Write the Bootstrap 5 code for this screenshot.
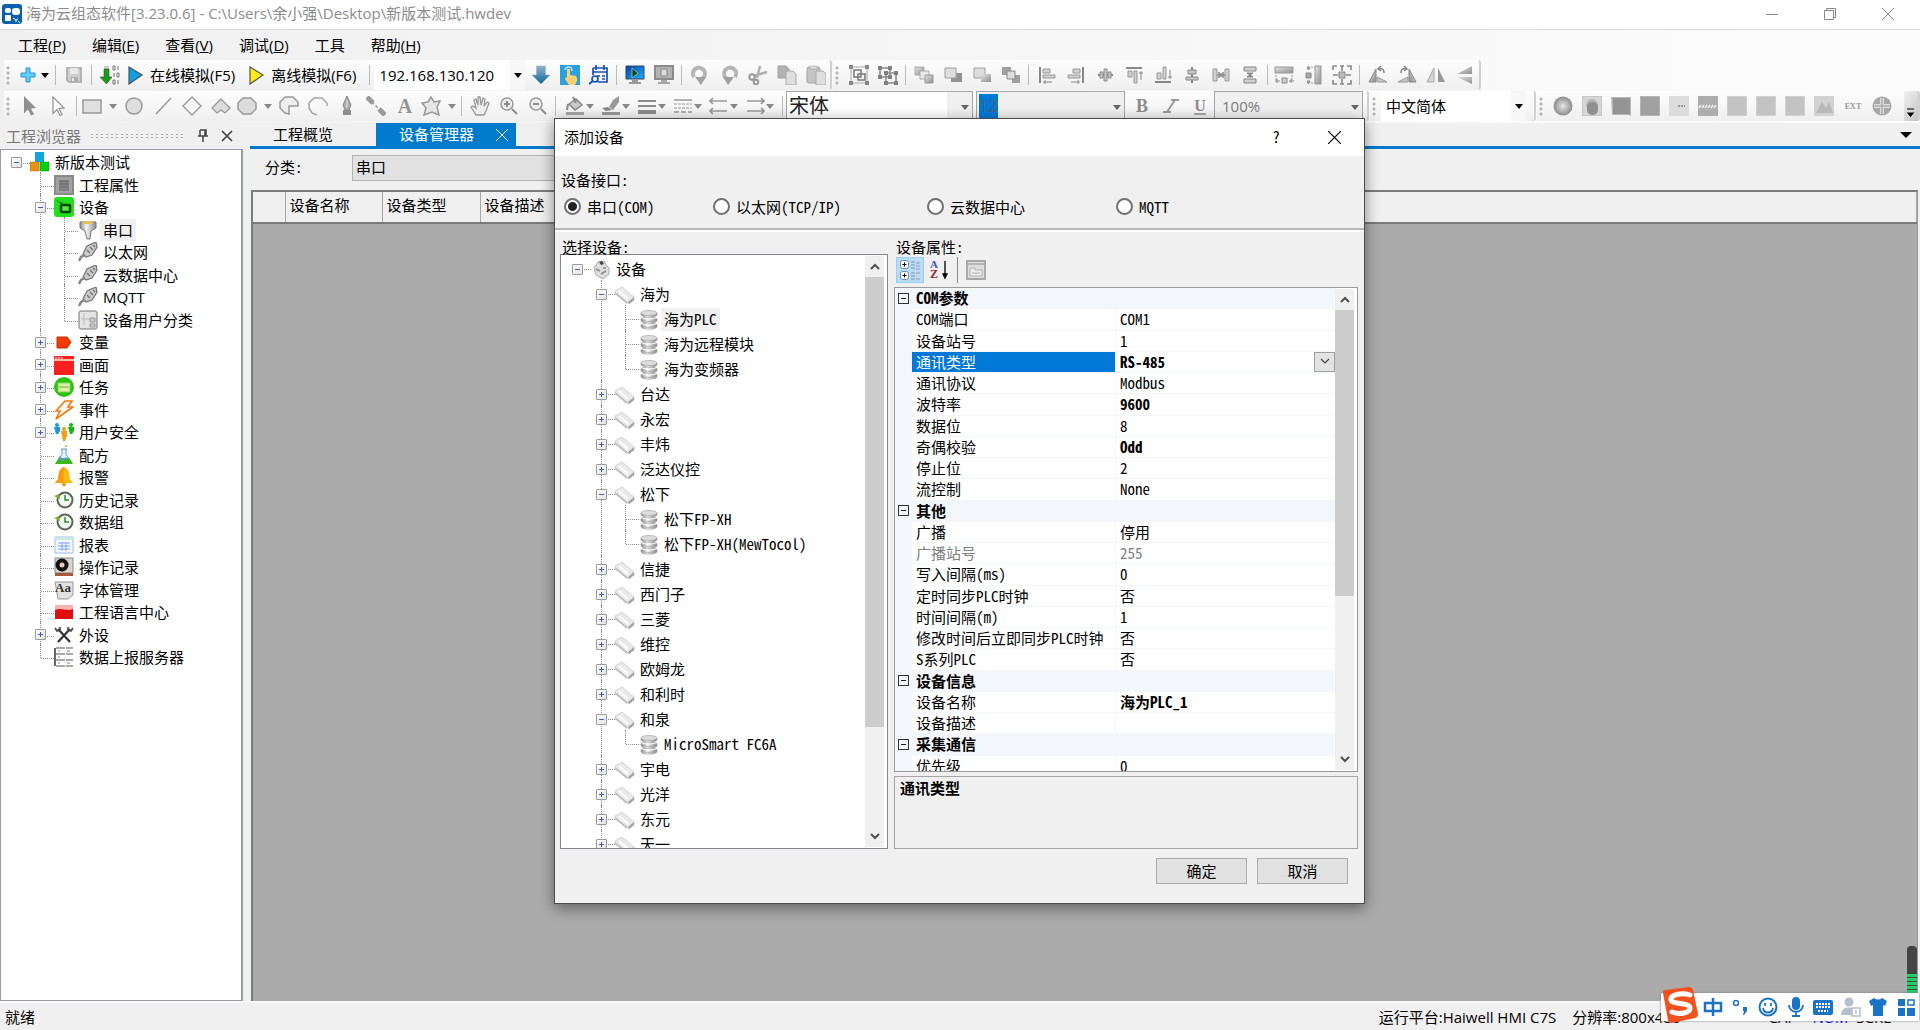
<!DOCTYPE html>
<html lang="zh-CN">
<head>
<meta charset="utf-8">
<meta name="viewport" content="width=device-width, initial-scale=1">
<title>海为云组态软件</title>
<link href="https://cdn.jsdelivr.net/npm/bootstrap@5.3.0/dist/css/bootstrap.min.css" rel="stylesheet">
<style>
:root{--face:#f0f0f0;--accent:#007acc}
body{font-family:"Open Sans","Noto Sans CJK SC",sans-serif;font-size:15px;color:#000;background:var(--face);line-height:1.5}
svg{display:block;flex:none}
button{border:0;background:none;padding:0;color:inherit;font:inherit}
.ic{width:20px;height:20px}
.app{min-height:100vh;position:relative;overflow:hidden}
.titlebar{height:30px;background:#fff;border-bottom:1px solid #d9dbdb;color:#8c8c8c;padding:0 3px 2px 2px}
.titlebar .winbtn{width:58px;display:flex;justify-content:center}
.chrome{background:linear-gradient(90deg,#f0f0f0,#fcfcfc)}
.menubar{height:30px;padding-left:5px}
.menubar a{color:#000;text-decoration:none;padding:0 13px}
.tools{height:31px}
.tools.last{height:32px}
.strip{display:flex;align-items:center;height:30px;background:linear-gradient(#fdfdfd,#f8f8f8 40%,#efefef);border-radius:0 3px 3px 0;border-right:2px solid #d0d0d0}
.strip.first{margin-left:4px}
.strip.more{margin-left:1px}
.grip{width:11px;height:20px;flex:none;background:radial-gradient(circle at 4px 3px,#b4b4b4 1px,transparent 2px) 0 0/11px 5px}
.sep{width:7px;height:20px;flex:none;background:linear-gradient(#bbb,#bbb) 3px 0/1px 100% no-repeat}
.sep.tight{width:5px}
.tb{width:29px;height:26px;display:flex;align-items:center;justify-content:center;flex:none}
.tb.drop{width:39px;justify-content:flex-start;padding-left:2px}
.tb.drop .car{margin-left:7px}
.tb.drop.near{width:36px}
.tb.drop.near .car{margin-left:1px}
.tb.add{width:37px;gap:3px;color:#000}
.tb.run{width:auto;padding:0 10px 0 2px;gap:4px}
.car{width:8px;height:5px;color:#888}
.add .car{color:#000}
.combo{position:relative;height:30px;flex:none;display:flex;align-items:center}
.combo::after{content:"";position:absolute;right:3px;top:13px;border:4px solid transparent;border-top:5px solid #666;border-bottom:0;pointer-events:none}
.combo select{appearance:none;border:0;outline:0;background:#fff;width:100%;height:100%;padding:0 22px 0 5px;color:#000}
.combo.open::after{border-top-color:#000}
.combo.open{background:linear-gradient(90deg,#fff calc(100% - 15px),#f7f7f7 0)}
.combo.open select{background:none}
.combo.framed{border:1px solid #a5a5a5;background:var(--face);align-items:stretch;padding:2px}
.combo.framed select{background:none;color:#7c7c7c}
.combo.fontname select{font-size:20px;line-height:20px;padding:0;color:#222}
.combo.fontname{background:linear-gradient(90deg,#fff 160px,#f0f0f0 0)}
.combo.fontsize input{width:19px;border:0;border-radius:0;padding:0;background:#0078d7;color:#4f6373;font-size:16px}
.w-ip{width:151px;margin:0 1px}.w-name{width:187px}.w-size{width:149px;margin:0 2px 0 3px}.w-zoom{width:149px}.w-lang{width:145px}
.workspace{flex:1}
.side{width:243px;margin-right:7px;flex:none}
.content{flex:1;min-width:0}
.sidehead{height:26px;color:#777;padding:0 10px 0 6px;gap:8px}
.dots{flex:1;height:6px;background:radial-gradient(#aaa 0 1px,transparent 1px) 0 0/5px 3px}
.pane{background:#fff;border:1px solid #9a9ca6;border-width:1px 2px 1px 1px;padding:1px 0 0 3px}
.tree,.tree ul{list-style:none;margin:0;padding:0}
.tree ul{padding-left:24px}
.tree li{position:relative}
.tree .nrow{display:flex;align-items:center;height:1.5em;white-space:nowrap;position:relative;z-index:1}
.tree .lead-in{width:24px;display:flex;justify-content:center;flex:none}
.tree .pic{width:24px;display:flex;justify-content:center;flex:none}
.tree .cap{padding:0 3px}
.tree .on{background:#f0f0f0}
.tree li li::before{content:"";position:absolute;left:12px;top:-2px;bottom:0;border-left:1px dotted #8a8a8a}
.tree li li:last-child::before{bottom:auto;height:14px}
.tree li::after{content:"";position:absolute;left:13px;width:13px;top:12px;border-top:1px dotted #8a8a8a}
.ex{width:11px;height:11px;border:1px solid #9a9a9a;border-radius:1px;background:linear-gradient(#3f5fae,#3f5fae) 2px 4px/5px 1px no-repeat,linear-gradient(135deg,#fff,#e2e2e2)}
.ex.plus{background:linear-gradient(#3f5fae,#3f5fae) 2px 4px/5px 1px no-repeat,linear-gradient(#3f5fae,#3f5fae) 4px 2px/1px 5px no-repeat,linear-gradient(135deg,#fff,#e2e2e2)}
.tabs{height:26px;border-bottom:3px solid var(--accent)}
.tabs .tabitem{height:23px;display:flex;align-items:center;padding:0 43px 0 23px;color:#000;text-decoration:none}
.tabs .tabitem.cur{background:var(--accent);color:#fff;padding:0 8px 0 23px;gap:22px}
.filter{height:41px;padding:0 0 4px 15px}
.filter label{width:87px}
.filter .combo{height:26px;width:600px;border:1px solid #b4b4b4;background:#e2e2e2}
.filter .combo select{background:none;padding-left:3px}
.gridbox{flex:1;background:#ababab;border:2px solid #7c7c7c;border-right:1px solid #9b9b9b;border-bottom:0;margin:0 2px 0 1px}
.gridbox table{table-layout:fixed;width:100%;background:var(--face)}
.gridbox th{font-weight:400;height:31px;padding:0 4px 3px;border-right:1px solid #a6a6a6;border-bottom:2px solid #7a7a7a}
.statusbar{height:29px;border-top:2px solid #f8f8f8;padding:1px 5px 0;line-height:26px}
.veil{position:absolute;inset:0;padding:118px 1px 0 0;z-index:5}
.dlg,.dlg button,.dlg label,.cjk{font-family:"Noto Sans CJK SC",sans-serif;font-feature-settings:"hwid"}
.dlg{width:811px;background:var(--face);border:1px solid #4c4c4c;box-shadow:0 4px 14px rgba(0,0,0,.45)}
.dlghead{height:37px;background:#fff;padding:0 23px 0 9px}
.iface{height:74px;padding:13px 5px 0 6px;border-bottom:2px solid #b8b8b8;box-shadow:0 2px 0 #fff}
.iface .choices{display:grid;grid-template-columns:149px 214px 189px 1fr;margin-top:4px}
.iface label{display:flex;align-items:center;gap:6px}
.iface input{appearance:none;margin:0 0 0 3px;width:17px;height:17px;border:2px solid #707070;border-radius:50%;background:#fff}
.iface input:checked{background:radial-gradient(#222 0 4px,#fff 5px)}
.dlgbody{padding:7px 6px 0 5px;gap:6px}
.devcol{width:328px}
.propcol{flex:1}
.hd{line-height:20px;padding-left:2px;height:17px}
.devbox{height:595px;border:1px solid #828790;background:#fff;display:flex}
.devbox .scroller{flex:1;overflow:hidden;padding-left:4px;padding-top:2px}
.devbox .tree .nrow{height:25px}
.sb{width:19px;background:#f0f0f0;display:flex;flex-direction:column;align-items:center;margin:1px 3px 1px 0;flex:none}
.sb .arr{height:21px;width:100%;display:flex;align-items:center;justify-content:center}
.sb .thumb{width:100%;background:#cdcdcd}
.h-dev{height:450px}.h-prop{height:286px}
.ptools{height:33px;gap:1px;padding:3px 2px 0}
.ptools button{width:28px;height:26px;display:flex;align-items:center;justify-content:center}
.ptools .on{background:#bcdcf4;border:1px solid #99cef5}
.ptools .bar{width:1px;height:26px;background:#8a8a8a;margin:0 3px}
.propbox{height:485px;border:1px solid #9a9a9a;background:#fff;display:flex}
.propbox .view{flex:1;overflow:hidden}
.propbox table{width:100%;table-layout:fixed;line-height:1.35;border-collapse:separate;border-spacing:0}
.propbox td,.propbox th{padding:0 0 0 4px;border-bottom:1px solid #f3f6fb;white-space:nowrap;font-weight:400}
.propbox .gut{background:#f3f6fb;padding:0}
.propbox .cat th{background:#f3f6fb;font-weight:700}
.propbox tr>*+*+*{border-left:1px solid #f3f6fb}
.propbox .val{font-weight:700}
.propbox .off>*{color:#808080}
.propbox .cur th{background:#0078d7;color:#fff}
.pick{width:21px;height:20px;border:1px solid #a0a0a0!important;background:#e3e3e3!important;display:flex!important;align-items:center;justify-content:center}
.fold{display:block;width:11px;height:11px;border:1px solid #333;margin-left:3px;background:linear-gradient(#222,#222) 2px 4px/5px 1px no-repeat}
.help{height:73px;border:1px solid #a5a5a5;margin-top:4px;padding:0 5px;font-weight:700}
.dlgfoot{padding:9px 16px 19px;gap:10px}
.dlgfoot button{width:91px;height:26px;border:1px solid #adadad;background:#e1e1e1;line-height:20px}
.meter{position:absolute;right:3px;bottom:9px;width:10px;height:75px;border-radius:4px 4px 0 0;background:linear-gradient(#444 28px,transparent 0),repeating-linear-gradient(#22cc66 0 3px,#3c4a40 3px 4px);z-index:6}
.ime{position:absolute;right:1px;bottom:9px;height:28px;width:258px;background:#fff;box-shadow:0 0 2px #777;z-index:7;padding:0 3px 0 38px;display:flex;align-items:center;justify-content:space-between}
.ime .logo{position:absolute;left:0;bottom:-2px}
</style>
<script src="https://cdn.jsdelivr.net/npm/bootstrap@5.3.0/dist/js/bootstrap.bundle.min.js"></script>
</head>
<body>
<svg width="0" height="0" class="position-absolute" aria-hidden="true">
<defs>
<linearGradient id="gg" x1="0" y1="0" x2="1" y2="1"><stop offset="0" stop-color="#e4e4e4"/><stop offset="1" stop-color="#8e8e8e"/></linearGradient>
<linearGradient id="gb" x1="0" y1="0" x2="0" y2="1"><stop offset="0" stop-color="#8fb4cc"/><stop offset="1" stop-color="#0c64a0"/></linearGradient>
<linearGradient id="gs" x1="0" y1="0" x2="1" y2="0"><stop offset="0" stop-color="#8c8c8c"/><stop offset=".4" stop-color="#f4f4f4"/><stop offset="1" stop-color="#8a8a8a"/></linearGradient>
<radialGradient id="gr"><stop offset="0" stop-color="#e6e6e6"/><stop offset="1" stop-color="#8c8c8c"/></radialGradient>
<linearGradient id="gm" x1="0" y1="0" x2="1" y2="1"><stop offset="0" stop-color="#003fa8"/><stop offset="1" stop-color="#22b2ff"/></linearGradient>
</defs>
<symbol id="car" viewBox="0 0 8 5"><path d="M0 0h8L4 5z" fill="currentColor"/></symbol>
<symbol id="app" viewBox="0 0 20 20"><rect width="20" height="20" rx="3" fill="#0a62ad"/><rect x="3" y="4" width="6" height="5" rx="2" fill="#fff"/><rect x="10" y="4" width="8" height="7" rx="3" fill="#fff"/><rect x="3" y="11" width="6" height="6" rx="1" fill="#fff"/><path d="M11 14l3 2 2-1M14 16v2M16 17l2 2" stroke="#fff" fill="none"/></symbol>
<symbol id="add" viewBox="0 0 20 20"><path d="M8 3h4v5h5v4h-5v5H8v-5H3V8h5z" fill="#5fd0f5" stroke="#2a93c8"/></symbol>
<symbol id="save" viewBox="0 0 20 20"><path d="M3 3h14v14H5l-2-2z" fill="#cfcfcf" stroke="#b4b4b4" stroke-width="2"/><path d="M6 3h8v6H6z" fill="#e9e9e9"/><path d="M7 12h7v5H7z" fill="#adadad"/><path d="M8 13h2v3H8z" fill="#eee"/></symbol>
<symbol id="bin" viewBox="0 0 20 20"><path d="M4 1h5v3H4z" fill="#ccc"/><path d="M4 4h5v8h3l-5.500 7L0 12h4z" fill="#12a012" stroke="#444" stroke-width=".6"/><path d="M13 1h2v4h-2zM18 1v4M14 8v4M17 8h2v4h-2zM13 15h2v4h-2zM18 15v4" stroke="#777" fill="none"/></symbol>
<symbol id="playb" viewBox="0 0 20 20"><path d="M3 2l13 8-13 9z" fill="#10a0e0" stroke="#456" stroke-width="1.200"/></symbol>
<symbol id="playy" viewBox="0 0 20 20"><path d="M3 2l13 8-13 9z" fill="#ffee10" stroke="#555" stroke-width="1.200"/></symbol>
<symbol id="down" viewBox="0 0 20 20"><path d="M5.500 1h9v9H19l-9 9-9-9h4.500z" fill="url(#gb)" stroke="#9ab" stroke-width=".5"/></symbol>
<symbol id="touch" viewBox="0 0 20 20"><path d="M0 0h20v20H0z" fill="#2aa0dc"/><path d="M5 5a3.500 3.500 0 1 1 7 1" stroke="#bfe6ff" stroke-width="1.500" fill="none"/><path d="M7 4h3v6l6 1 1 2v3l-2 4H9l-4-6 1-2 1 1z" fill="#ffcf70"/></symbol>
<symbol id="cal" viewBox="0 0 20 20"><path d="M4 3h14v14H9M4 3v7M4 7h14M7 0v5M15 0v5M8 11h3M13 11h3M13 14h3" fill="none" stroke="#1550b4" stroke-width="1.700"/><circle cx="6" cy="14" r="3" fill="none" stroke="#1550b4" stroke-width="1.700"/><path d="M4 16l-4 3" stroke="#1550b4" stroke-width="2"/></symbol>
<symbol id="mon" viewBox="0 0 20 20"><path d="M1 1h18v13H1z" fill="url(#gm)" stroke="#345"/><path d="M7 3l6 5-6 5z" fill="#0a4a10" stroke="#cde" stroke-width=".6"/><path d="M7 15h6v2h3v2H4v-2h3z" fill="#9a9a9a"/></symbol>
<symbol id="mong" viewBox="0 0 20 20"><path d="M1 1h18v13H1z" fill="#b4b4b4" stroke="#8c8c8c" stroke-width="2"/><path d="M7 4h6v7H7z" fill="#ddd" stroke="#888"/><path d="M7 15h6v2h3v2H4v-2h3z" fill="#a8a8a8"/></symbol>
<symbol id="undo" viewBox="0 0 20 20"><path d="M4 12A6 6 0 1 1 13 13" fill="none" stroke="#b4b4b4" stroke-width="4"/><path d="M5 12h11l-5 8z" fill="#a0a0a0"/></symbol>
<symbol id="redo" viewBox="0 0 20 20"><use href="#undo" transform="matrix(-1 0 0 1 20 0)"/></symbol>
<symbol id="cut" viewBox="0 0 20 20"><path d="M12 1L9 13M19 7L6 11" stroke="#b0b0b0" stroke-width="2.500"/><circle cx="4" cy="12" r="2.700" fill="none" stroke="#999" stroke-width="2"/><circle cx="8" cy="17" r="2.300" fill="none" stroke="#999" stroke-width="2"/></symbol>
<symbol id="copy" viewBox="0 0 20 20"><path d="M1 1h8l3 3v9H1z" fill="#b2b2b2" stroke="#a0a0a0"/><path d="M9 6h7l3 3v11H9z" fill="#dedede" stroke="#aaa"/></symbol>
<symbol id="paste" viewBox="0 0 20 20"><rect x="1" y="2" width="13" height="16" rx="2" fill="#c4c4c4" stroke="#a4a4a4"/><path d="M4 1h7v3H4z" fill="#ddd" stroke="#999" stroke-width=".5"/><path d="M10 6h7l3 3v11H10z" fill="#dedede" stroke="#aaa"/></symbol>
<symbol id="grp" viewBox="0 0 20 20"><path d="M2 2h16v16H2z" fill="none" stroke="#aaa"/><path d="M5 5h7v7H5zM9 9h7v6H9z" fill="none" stroke="#777" stroke-width="1.500"/><path d="M0 0h4v4H0zM16 0h4v4h-4zM0 16h4v4H0zM16 16h4v4h-4z" fill="#888"/></symbol>
<symbol id="ung" viewBox="0 0 20 20"><path d="M2 3h10v9H2zM8 8h10v10H8z" fill="none" stroke="#888" stroke-width="1.500"/><path d="M0 1h4v4H0zM10 1h4v4h-4zM0 10h4v4H0zM16 6h4v4h-4zM6 16h4v4H6zM16 16h4v4h-4zM6 6h4v4H6zM10 10h4v4h-4z" fill="#808080"/></symbol>
<symbol id="z1" viewBox="0 0 20 20"><path d="M1 2h9v8H1z" fill="url(#gg)" stroke="#aaa"/><path d="M6 6h9v8H6z" fill="#e8e8e8" stroke="#aaa"/><path d="M11 10h8v8h-8z" fill="url(#gg)" stroke="#999"/></symbol>
<symbol id="z2" viewBox="0 0 20 20"><path d="M8 8h11v9H8z" fill="#929292"/><path d="M2 3h11v10H2z" fill="#ddd" stroke="#a0a0a0"/></symbol>
<symbol id="z3" viewBox="0 0 20 20"><path d="M2 3h11v10H2z" fill="#ddd" stroke="#a0a0a0"/><path d="M9 9h10v8H9z" fill="url(#gg)"/></symbol>
<symbol id="z4" viewBox="0 0 20 20"><path d="M1 2h9v8H1zM11 10h8v8h-8z" fill="#a0a0a0"/><path d="M6 6h8v8H6z" fill="#ddd" stroke="#888"/></symbol>
<symbol id="al" viewBox="0 0 20 20"><path d="M3 2v16" stroke="#888" stroke-width="2"/><path d="M6 4h7v4H6zM6 10h12v3H6z" fill="#d0d0d0" stroke="#999"/><path d="M6 17h9M8 15v4" stroke="#888"/></symbol>
<symbol id="ar" viewBox="0 0 20 20"><use href="#al" transform="matrix(-1 0 0 1 20 0)"/></symbol>
<symbol id="ac" viewBox="0 0 20 20"><path d="M3 10h15" stroke="#888" stroke-width="2"/><path d="M5 7h3v6H5zM9 4h3v12H9zM13 7h3v6h-3z" fill="#c8c8c8" stroke="#888"/></symbol>
<symbol id="at" viewBox="0 0 20 20"><path d="M2 3h16" stroke="#888" stroke-width="2"/><path d="M4 6h4v6H4zM10 6h3v12h-3z" fill="#d0d0d0" stroke="#999"/><path d="M17 6v9M15 8h4" stroke="#888"/></symbol>
<symbol id="ab" viewBox="0 0 20 20"><use href="#at" transform="matrix(1 0 0 -1 0 20)"/></symbol>
<symbol id="am" viewBox="0 0 20 20"><path d="M10 2v16" stroke="#888" stroke-width="2"/><path d="M6 5h8v4H6zM4 12h12v3H4z" fill="#c8c8c8" stroke="#888"/></symbol>
<symbol id="dh" viewBox="0 0 20 20"><path d="M2 4h4v12H2zM14 4h4v12h-4z" fill="#d0d0d0" stroke="#999"/><path d="M6 10h8M8 7v6M12 7v6M10 8v4" stroke="#888" stroke-width="1.500"/></symbol>
<symbol id="dv" viewBox="0 0 20 20"><path d="M4 2h12v4H4zM4 14h12v4H4z" fill="#d0d0d0" stroke="#888"/><path d="M7 8h6l-3 2 3 2H7l3-2z" fill="#888" stroke="#888"/></symbol>
<symbol id="sw" viewBox="0 0 20 20"><path d="M1 2h18v6H1z" fill="url(#gg)" stroke="#999"/><path d="M2 10v6M18 10v6" stroke="#999" stroke-dasharray="2 1"/><path d="M8 13h5v5H8z" fill="#ccc" stroke="#888"/><path d="M1 16h5M15 16h5M3 14v4M17 14v4" stroke="#888"/></symbol>
<symbol id="sh" viewBox="0 0 20 20"><path d="M12 1h6v18h-6z" fill="url(#gg)" stroke="#999"/><path d="M3 8h5v5H3zM4 4l1.500-3L7 4zM4 16l1.500 3L7 16z" fill="#aaa" stroke="#888"/><path d="M8 2h4M8 18h4" stroke="#999" stroke-dasharray="2 1"/></symbol>
<symbol id="sa" viewBox="0 0 20 20"><path d="M1 1h4M1 1v4M15 1h4v4M1 15v4h4M19 15v4h-4M8 1h4M8 19h4M10 1v5M10 14v5M1 10h5M14 10h5" fill="none" stroke="#888" stroke-width="1.600"/><path d="M7 7h6v6H7z" fill="#bbb" stroke="#888"/></symbol>
<symbol id="rl" viewBox="0 0 20 20"><path d="M1 17L8 4v13z" fill="url(#gg)" stroke="#888"/><path d="M9 17h10L9 12z" fill="#c8c8c8" stroke="#999"/><path d="M11 4c4-1 5 1 5 4M13 1l-3 3 3 2" fill="none" stroke="#888" stroke-width="1.500"/></symbol>
<symbol id="rr" viewBox="0 0 20 20"><use href="#rl" transform="matrix(-1 0 0 1 20 0)"/></symbol>
<symbol id="fh" viewBox="0 0 20 20"><path d="M1 17L8 3v14z" fill="#d4d4d4" stroke="#aaa"/><path d="M19 17L12 3v14z" fill="#999"/></symbol>
<symbol id="fv" viewBox="0 0 20 20"><path d="M17 1L2 9h15z" fill="url(#gg)"/><path d="M17 19L2 12h15z" fill="url(#gg)"/></symbol>
<symbol id="cur1" viewBox="0 0 20 20"><path d="M4 0l12 12-5 .5 3 6-3 1-3-6-4 4z" fill="#8f8f8f"/></symbol>
<symbol id="cur2" viewBox="0 0 20 20"><path d="M4 1l11 11-5 .5 3 6-2 1-3-6-4 4z" fill="#fff" stroke="#999" stroke-width="1.300"/></symbol>
<symbol id="rect" viewBox="0 0 20 20"><path d="M1 4h18v13H1z" fill="#e0e0e0" stroke="#999" stroke-width="1.500"/></symbol>
<symbol id="circ" viewBox="0 0 20 20"><circle cx="10" cy="10" r="8" fill="#dedede" stroke="#999" stroke-width="1.500"/></symbol>
<symbol id="line" viewBox="0 0 20 20"><path d="M3 18L18 2" stroke="#999" stroke-width="1.500"/></symbol>
<symbol id="dia" viewBox="0 0 20 20"><path d="M10 1l9 9-9 9-9-9z" fill="#f6f6f6" stroke="#999" stroke-width="1.400"/></symbol>
<symbol id="poly" viewBox="0 0 20 20"><path d="M10 3l9 9-5 5-4-3-4 3-5-5z" fill="#dcdcdc" stroke="#999" stroke-width="1.300"/></symbol>
<symbol id="oct" viewBox="0 0 20 20"><path d="M6 2h8l5 5v6l-5 5H6l-5-5V7z" fill="#dcdcdc" stroke="#999" stroke-width="1.500"/></symbol>
<symbol id="pie" viewBox="0 0 20 20"><path d="M10 10v8l-4-1-5-5V6l5-5h8l5 5v4z" fill="#eee" stroke="#999" stroke-width="1.500"/></symbol>
<symbol id="arc" viewBox="0 0 20 20"><path d="M9 19l-5-2-3-5V7l5-5h8l5 5v3" fill="none" stroke="#a4a4a4" stroke-width="1.500"/></symbol>
<symbol id="pen" viewBox="0 0 20 20"><path d="M10 0l4 9-2 5H8L6 9z" fill="#aaa" stroke="#888"/><path d="M10 4v8" stroke="#eee"/><path d="M6 14h8v5H6z" fill="#8c8c8c"/></symbol>
<symbol id="conn" viewBox="0 0 20 20"><path d="M1 1l6 6M13 13l6 6" stroke="#999" stroke-width="5"/><path d="M6 6l8 8" stroke="#999" stroke-width="1.500" stroke-dasharray="3 2"/></symbol>
<symbol id="star" viewBox="0 0 20 20"><path d="M10 1l3 5 6-1-3 6 2 8-7-3-8 3 2-7-4-5 6-1z" fill="#e6e6e6" stroke="#999" stroke-width="1.500"/></symbol>
<symbol id="hand" viewBox="0 0 20 20"><path d="M6 19l-5-8 2-1 3 2L4 4l2-1 2 6V1h2l1 8 2-7 2 1-1 7 3-4 2 1-3 8-2 4z" fill="#ededed" stroke="#999" stroke-width="1.300"/></symbol>
<symbol id="zin" viewBox="0 0 20 20"><circle cx="8" cy="8" r="6" fill="#eee" stroke="#999" stroke-width="1.500"/><path d="M5 8h6M8 5v6M13 13l5 5" stroke="#8c8c8c" stroke-width="2"/></symbol>
<symbol id="zout" viewBox="0 0 20 20"><circle cx="8" cy="8" r="6" fill="#eee" stroke="#999" stroke-width="1.500"/><path d="M5 8h6M13 13l5 5" stroke="#8c8c8c" stroke-width="2"/></symbol>
<symbol id="buck" viewBox="0 0 20 20"><path d="M4 8l7-5 6 6-7 5z" fill="#ccc" stroke="#888" stroke-width="1.500"/><path d="M8 1l3 6M3 8l-1 6" stroke="#888" stroke-width="2"/><path d="M1 16h18v3H1z" fill="#a4a4a4"/></symbol>
<symbol id="brush" viewBox="0 0 20 20"><path d="M18 0l-6 4-4 7 4 3 6-8z" fill="#999"/><path d="M1 12l6-1 4 3-6 1z" fill="#888"/><path d="M1 16h18v3H1z" fill="#999"/></symbol>
<symbol id="lw" viewBox="0 0 20 20"><path d="M1 5h18M1 10h18" stroke="#8c8c8c" stroke-width="2"/><path d="M1 16h18" stroke="#8c8c8c" stroke-width="4"/></symbol>
<symbol id="ls" viewBox="0 0 20 20"><path d="M1 4h18" stroke="#999" stroke-width="1.500"/><path d="M1 8h18M1 12h18" stroke="#999" stroke-dasharray="3 1"/><path d="M1 16h18" stroke="#999" stroke-dasharray="5 2" stroke-width="1.500"/></symbol>
<symbol id="la" viewBox="0 0 20 20"><path d="M1 5h17M4 2L1 5l3 3M1 15h17M4 12l-3 3 3 3" fill="none" stroke="#999" stroke-width="1.700"/></symbol>
<symbol id="ra" viewBox="0 0 20 20"><use href="#la" transform="matrix(-1 0 0 1 20 0)"/></symbol>
<symbol id="bi" viewBox="0 0 20 20"><path d="M10 4h8M2 16h8M14 4L6 16" stroke="#999" stroke-width="2"/></symbol>
<symbol id="w1" viewBox="0 0 20 20"><circle cx="10" cy="10" r="9.500" fill="url(#gr)"/></symbol>
<symbol id="w2" viewBox="0 0 20 20"><path d="M0 0h20v20H0z" fill="#d6d6d6" stroke="#bbb"/><circle cx="10" cy="9" r="6" fill="#b4b4b4"/><rect x="5" y="6" width="11" height="13" rx="5" fill="#909090"/></symbol>
<symbol id="w3" viewBox="0 0 20 20"><path d="M0 1h20v19l-2-1H1z" fill="#b8b8b8"/><path d="M2 2h17v16H2z" fill="#949494"/></symbol>
<symbol id="w4" viewBox="0 0 20 20"><path d="M0 0h20v20H0z" fill="#b4b4b4"/><path d="M1 1h18v18H1z" fill="#a0a0a0"/></symbol>
<symbol id="w5" viewBox="0 0 20 20"><path d="M0 0h20v20H0z" fill="#dcdcdc"/><path d="M9 10h7" stroke="#999" stroke-dasharray="2 1" stroke-width="2"/></symbol>
<symbol id="w6" viewBox="0 0 20 20"><path d="M0 0h20v20H0z" fill="#adadad"/><path d="M1 12l2-3M4 12l2-3M7 12l2-3M10 12l2-3M13 12l2-3M16 12l2-3" stroke="#eee" stroke-width="1.500"/></symbol>
<symbol id="w7" viewBox="0 0 20 20"><path d="M0 0h20v20H0z" fill="#d0d0d0"/><path d="M1 1h18v18H1z" fill="#c3c3c3"/></symbol>
<symbol id="w8" viewBox="0 0 20 20"><path d="M0 0h20v20H0z" fill="#d2d2d2"/><path d="M2 17l6-11 4 6 3-6 4 11z" fill="#b8b8b8"/></symbol>
<symbol id="w9" viewBox="0 0 20 20"><circle cx="10" cy="10" r="9.500" fill="#a8a8a8"/><path d="M10 2v16M2 10h16" stroke="#ddd" stroke-width="4"/><path d="M10 1v18M1 10h18" stroke="#999"/></symbol>
<symbol id="cubes" viewBox="0 0 20 20"><path d="M5 0h9v10H5z" fill="#12a4e0"/><path d="M0 10h9v9H0z" fill="#e89410" stroke="#b87008" stroke-width=".5"/><path d="M10 10h9v9h-9z" fill="#0dd00d" stroke="#0a900a" stroke-width=".5"/></symbol>
<symbol id="attr" viewBox="0 0 20 20"><path d="M1 1h18v18H1z" fill="#a2a2a2" stroke="#8a8a8a" stroke-width="2"/><path d="M5 5h10v10H5z" fill="#858585"/><path d="M5 6h10M5 9h10M5 12h10M5 15h10" stroke="#6a6a6a"/></symbol>
<symbol id="dev" viewBox="0 0 20 20"><rect width="20" height="20" rx="3" fill="#22e01a"/><path d="M3 3l3 3h3" stroke="#063" fill="none"/><rect x="7" y="8" width="9" height="7" rx="1" fill="#4bf03a" stroke="#041" stroke-width="2.500"/></symbol>
<symbol id="com" viewBox="0 0 20 20"><path d="M2 2h16v6l-5 3-1 8H9l-2-8-5-3z" fill="url(#gs)" stroke="#777"/><path d="M5 1h10v3H5z" fill="#e8c060"/></symbol>
<symbol id="net" viewBox="0 0 20 20"><path d="M18 0l1 5-5 8-6 2-3-3 4-8z" fill="#ccc" stroke="#777" stroke-width="1.300"/><path d="M9 8l3 3M12 5l3 3M15 3l2 2" stroke="#777" stroke-width="1.500"/><path d="M7 13l-4 2-2 4" stroke="#888" stroke-width="2.500" fill="none"/></symbol>
<symbol id="cls" viewBox="0 0 20 20"><rect x="1" y="1" width="18" height="18" rx="2" fill="#e4e4e4" stroke="#777"/><path d="M3 9h13M6 3v12" stroke="#bbb"/><path d="M12 8h5v4h-5zM12 14h5v3h-5z" fill="#ccc" stroke="#999"/></symbol>
<symbol id="tag" viewBox="0 0 20 20"><path d="M3 5h10l4 5-4 6H3z" fill="#f63a06" stroke="#c02c00"/></symbol>
<symbol id="win" viewBox="0 0 20 20"><path d="M0 1h20v19H0z" fill="#fb2020"/><path d="M0 5h20" stroke="#fff0d0" stroke-width="1.500"/><path d="M1 3h8" stroke="#fff" stroke-dasharray="2 1"/></symbol>
<symbol id="task" viewBox="0 0 20 20"><circle cx="10" cy="10" r="10" fill="#2bc40c"/><path d="M4 6h12v9H4z" fill="#d9f2a8" stroke="#8c6"/><path d="M5 10h10" stroke="#7a4"/></symbol>
<symbol id="evt" viewBox="0 0 20 20"><path d="M11 1h7l-4 6h5L2 19l4-8H2z" fill="#fff8ec" stroke="#f07a10" stroke-width="1.600"/></symbol>
<symbol id="usr" viewBox="0 0 20 20"><circle cx="3" cy="3" r="2" fill="#1a9ad8"/><path d="M0 5h6v4l-2 3H2z" fill="#1a9ad8"/><circle cx="17" cy="3" r="2" fill="#14b814"/><path d="M14 5h6v4l-2 3h-2z" fill="#14b814"/><circle cx="10" cy="7" r="2" fill="#f0a010"/><path d="M7 9h6v5l-2 5H9z" fill="#f0a010"/></symbol>
<symbol id="flask" viewBox="0 0 20 20"><path d="M7 4h6M8 4v5L2 18h16l-6-9V4" fill="#dff0fa" stroke="#6aa0c8"/><path d="M5 13h10l4 6H1z" fill="#3cb81c"/><path d="M5 12l4 3 3-2" stroke="#5a9ad8" stroke-width="2" fill="none"/><circle cx="12" cy="1" r="1" fill="#8c4"/></symbol>
<symbol id="bell" viewBox="0 0 20 20"><path d="M10 0c6 2 5 8 6 12l3 4H1l3-4c1-4 0-10 6-12z" fill="#fdb813"/><path d="M10 0C4 2 5 8 4 12l-3 4h8z" fill="#f89b10"/><circle cx="10" cy="17.500" r="2" fill="#f89b10"/></symbol>
<symbol id="clock" viewBox="0 0 20 20"><circle cx="11" cy="10" r="7.500" fill="#f4f8f2" stroke="#5a6656" stroke-width="2"/><path d="M11 5v5h4" stroke="#2a8a3a" stroke-width="1.500" fill="none"/><path d="M0 6l5-2 1 5z" fill="#7cb41c"/></symbol>
<symbol id="rep" viewBox="0 0 20 20"><path d="M1 2h18v16H1z" fill="#f4faff" stroke="#9cbcf0"/><path d="M1 2h18v3H1z" fill="#c8e8e0"/><path d="M4 8h12M4 11h12M4 14h12M8 7v9M12 7v9" stroke="#7aa4f0"/></symbol>
<symbol id="rec" viewBox="0 0 20 20"><path d="M1 1h18v15H1z" fill="#d8d4d0" stroke="#888"/><circle cx="8" cy="8" r="6.500" fill="#111"/><circle cx="8" cy="8" r="2.500" fill="#f0c8b8"/><path d="M1 16h18v3H1z" fill="#a65a3c"/></symbol>
<symbol id="page" viewBox="0 0 20 20"><path d="M1 2h18v13l-5 4H4z" fill="#e2e2e2" stroke="#9a9a9a"/></symbol>
<symbol id="lang" viewBox="0 0 20 20"><path d="M1 3h18v6H1z" fill="#f8b4b4"/><path d="M1 8c6-3 12 2 18-1v10H1z" fill="#e01010"/></symbol>
<symbol id="tool" viewBox="0 0 20 20"><path d="M4 4l12 13M16 4L4 17" stroke="#333" stroke-width="2.200"/><path d="M1 3l2 3 3-1V2M19 3l-2 3-3-1V2" fill="none" stroke="#444" stroke-width="1.600"/></symbol>
<symbol id="srv" viewBox="0 0 20 20"><path d="M1 1v18" stroke="#333" stroke-width="1.500"/><path d="M2 1h17M2 7h17M2 13h17M2 19h17" stroke="#555" stroke-width="1.200" stroke-dasharray="9 1"/><path d="M4 4h2M4 10h2M4 16h2M13 4h3M13 16h3" stroke="#888"/></symbol>
<symbol id="root" viewBox="0 0 20 20"><path d="M3 8l4-6 6-1 3 5 2 2v6l-6 5-7-4z" fill="#dedede" stroke="#aaa"/><path d="M8 2l3-1 2 3-3 1z" fill="#444"/><path d="M5 9l4 2M10 14l5-3M12 8h3" stroke="#8a8a8a" stroke-width="1.500"/></symbol>
<symbol id="mod" viewBox="0 0 20 20"><path d="M0 6l7-4 12 10v3l-5 4L0 8z" fill="#e9e9e9" stroke="#cacaca" stroke-width=".8"/><path d="M0 7l12 10v2L0 9z" fill="#b8b8b8"/><path d="M4 6l9 8" stroke="#fff" stroke-width="2"/><path d="M13 17l6-5v3l-5 4z" fill="#a4a4a4"/></symbol>
<symbol id="db" viewBox="0 0 20 20"><g fill="url(#gs)" stroke="#999" stroke-width=".6"><path d="M2 15v2c2 3 14 3 16 0v-2z"/><ellipse cx="10" cy="15" rx="8" ry="2.500"/><path d="M2 9v2c2 3 14 3 16 0V9z"/><ellipse cx="10" cy="9" rx="8" ry="2.500"/><path d="M2 3v2c2 3 14 3 16 0V3z"/><ellipse cx="10" cy="3" rx="8" ry="2.500" fill="#ddd"/></g><path d="M2 7.500c4 2 12 2 16 0M2 13.500c4 2 12 2 16 0" stroke="#fff" fill="none"/></symbol>
<symbol id="up" viewBox="0 0 10 7"><path d="M1 6l4-4 4 4" fill="none" stroke="#505050" stroke-width="2"/></symbol>
<symbol id="dn" viewBox="0 0 10 7"><path d="M1 1l4 4 4-4" fill="none" stroke="#505050" stroke-width="2"/></symbol>
<symbol id="x" viewBox="0 0 12 12"><path d="M0 0l12 12M12 0L0 12" stroke="currentColor" fill="none"/></symbol>
</svg>

<div class="app d-flex flex-column">
<header class="titlebar d-flex align-items-center">
  <svg class="ic"><use href="#app"/></svg><span class="ms-1 flex-grow-1">海为云组态软件[3.23.0.6] - C:\Users\余小强\Desktop\新版本测试.hwdev</span>
  <button class="winbtn" aria-label="最小化"><svg width="12" height="12"><path d="M0 6.500h12" stroke="#888"/></svg></button>
  <button class="winbtn" aria-label="还原"><svg width="12" height="12"><path d="M.5 2.500h9v9h-9zM2.500 2V.5h9v9H10" fill="none" stroke="#888"/></svg></button>
  <button class="winbtn" aria-label="关闭"><svg width="12" height="12"><use href="#x"/></svg></button>
</header>
<div class="chrome">
<nav class="menubar d-flex align-items-center">
  <a href="#">工程(<u>P</u>)</a><a href="#">编辑(<u>E</u>)</a><a href="#">查看(<u>V</u>)</a><a href="#">调试(<u>D</u>)</a><a href="#">工具</a><a href="#">帮助(<u>H</u>)</a>
</nav>
<div class="tools d-flex">
 <div class="strip first">
  <span class="grip"></span>
  <button class="tb add" aria-label="新建"><svg class="ic"><use href="#add"/></svg><svg class="car"><use href="#car"/></svg></button><span class="sep"></span>
  <button class="tb" aria-label="保存"><svg class="ic"><use href="#save"/></svg></button><span class="sep"></span>
  <button class="tb" aria-label="编译"><svg class="ic"><use href="#bin"/></svg></button>
  <button class="tb run"><svg class="ic"><use href="#playb"/></svg>在线模拟(F5)</button>
  <button class="tb run"><svg class="ic"><use href="#playy"/></svg>离线模拟(F6)</button><span class="sep"></span>
  <div class="combo open w-ip"><select aria-label="地址"><option>192.168.130.120</option></select></div>
  <button class="tb" aria-label="下载"><svg class="ic"><use href="#down"/></svg></button>
  <button class="tb" aria-label="触摸"><svg class="ic"><use href="#touch"/></svg></button>
  <button class="tb" aria-label="计划"><svg class="ic"><use href="#cal"/></svg></button><span class="sep"></span>
  <button class="tb" aria-label="运行"><svg class="ic"><use href="#mon"/></svg></button>
  <button class="tb" aria-label="停止"><svg class="ic"><use href="#mong"/></svg></button><span class="sep"></span>
  <button class="tb" aria-label="撤销"><svg class="ic"><use href="#undo"/></svg></button>
  <button class="tb" aria-label="重做"><svg class="ic"><use href="#redo"/></svg></button>
  <button class="tb" aria-label="剪切"><svg class="ic"><use href="#cut"/></svg></button>
  <button class="tb" aria-label="复制"><svg class="ic"><use href="#copy"/></svg></button>
  <button class="tb" aria-label="粘贴"><svg class="ic"><use href="#paste"/></svg></button>
 </div>
 <div class="strip more">
  <span class="grip"></span>
  <button class="tb" aria-label="组合"><svg class="ic"><use href="#grp"/></svg></button>
  <button class="tb" aria-label="取消组合"><svg class="ic"><use href="#ung"/></svg></button><span class="sep"></span>
  <button class="tb" aria-label="置顶"><svg class="ic"><use href="#z1"/></svg></button>
  <button class="tb" aria-label="上移"><svg class="ic"><use href="#z2"/></svg></button>
  <button class="tb" aria-label="下移"><svg class="ic"><use href="#z3"/></svg></button>
  <button class="tb" aria-label="置底"><svg class="ic"><use href="#z4"/></svg></button><span class="sep"></span>
  <button class="tb" aria-label="左对齐"><svg class="ic"><use href="#al"/></svg></button>
  <button class="tb" aria-label="右对齐"><svg class="ic"><use href="#ar"/></svg></button>
  <button class="tb" aria-label="水平居中"><svg class="ic"><use href="#ac"/></svg></button>
  <button class="tb" aria-label="上对齐"><svg class="ic"><use href="#at"/></svg></button>
  <button class="tb" aria-label="下对齐"><svg class="ic"><use href="#ab"/></svg></button>
  <button class="tb" aria-label="垂直居中"><svg class="ic"><use href="#am"/></svg></button>
  <button class="tb" aria-label="横向分布"><svg class="ic"><use href="#dh"/></svg></button>
  <button class="tb" aria-label="纵向分布"><svg class="ic"><use href="#dv"/></svg></button><span class="sep tight"></span>
  <button class="tb" aria-label="等宽"><svg class="ic"><use href="#sw"/></svg></button>
  <button class="tb" aria-label="等高"><svg class="ic"><use href="#sh"/></svg></button>
  <button class="tb" aria-label="等大小"><svg class="ic"><use href="#sa"/></svg></button><span class="sep"></span>
  <button class="tb" aria-label="左旋转"><svg class="ic"><use href="#rl"/></svg></button>
  <button class="tb" aria-label="右旋转"><svg class="ic"><use href="#rr"/></svg></button>
  <button class="tb" aria-label="水平翻转"><svg class="ic"><use href="#fh"/></svg></button>
  <button class="tb" aria-label="垂直翻转"><svg class="ic"><use href="#fv"/></svg></button>
 </div>
</div>
<div class="tools last d-flex">
 <div class="strip first">
  <span class="grip"></span>
  <button class="tb" aria-label="选择"><svg class="ic"><use href="#cur1"/></svg></button>
  <button class="tb" aria-label="节点"><svg class="ic"><use href="#cur2"/></svg></button><span class="sep"></span>
  <button class="tb drop" aria-label="矩形"><svg class="ic"><use href="#rect"/></svg><svg class="car"><use href="#car"/></svg></button>
  <button class="tb" aria-label="圆"><svg class="ic"><use href="#circ"/></svg></button>
  <button class="tb" aria-label="直线"><svg class="ic"><use href="#line"/></svg></button>
  <button class="tb" aria-label="菱形"><svg class="ic"><use href="#dia"/></svg></button>
  <button class="tb" aria-label="多边形"><svg class="ic"><use href="#poly"/></svg></button>
  <button class="tb drop" aria-label="八边形"><svg class="ic"><use href="#oct"/></svg><svg class="car"><use href="#car"/></svg></button>
  <button class="tb" aria-label="扇形"><svg class="ic"><use href="#pie"/></svg></button>
  <button class="tb" aria-label="弧"><svg class="ic"><use href="#arc"/></svg></button>
  <button class="tb" aria-label="钢笔"><svg class="ic"><use href="#pen"/></svg></button>
  <button class="tb" aria-label="连接线"><svg class="ic"><use href="#conn"/></svg></button>
  <button class="tb" aria-label="文字"><svg class="ic"><text x="10" y="17" text-anchor="middle" font-family="Liberation Serif" font-weight="700" font-size="20" fill="#929292">A</text></svg></button>
  <button class="tb drop" aria-label="星形"><svg class="ic"><use href="#star"/></svg><svg class="car"><use href="#car"/></svg></button><span class="sep"></span>
  <button class="tb" aria-label="平移"><svg class="ic"><use href="#hand"/></svg></button>
  <button class="tb" aria-label="放大"><svg class="ic"><use href="#zin"/></svg></button>
  <button class="tb" aria-label="缩小"><svg class="ic"><use href="#zout"/></svg></button><span class="sep me-1"></span>
  <button class="tb drop near" aria-label="填充"><svg class="ic"><use href="#buck"/></svg><svg class="car"><use href="#car"/></svg></button>
  <button class="tb drop near" aria-label="线色"><svg class="ic"><use href="#brush"/></svg><svg class="car"><use href="#car"/></svg></button>
  <button class="tb drop near" aria-label="线宽"><svg class="ic"><use href="#lw"/></svg><svg class="car"><use href="#car"/></svg></button>
  <button class="tb drop near" aria-label="线型"><svg class="ic"><use href="#ls"/></svg><svg class="car"><use href="#car"/></svg></button>
  <button class="tb drop near" aria-label="左箭头"><svg class="ic"><use href="#la"/></svg><svg class="car"><use href="#car"/></svg></button>
  <button class="tb drop near" aria-label="右箭头"><svg class="ic"><use href="#ra"/></svg><svg class="car"><use href="#car"/></svg></button><span class="sep"></span>
  <div class="combo framed fontname w-name"><select aria-label="字体"><option>宋体</option></select></div>
  <div class="combo framed fontsize w-size"><input aria-label="字号" value="12"></div>
  <button class="tb" aria-label="加粗"><svg class="ic"><text x="10" y="16" text-anchor="middle" font-family="Liberation Serif" font-weight="700" font-size="18" fill="#8c8c8c">B</text></svg></button>
  <button class="tb" aria-label="倾斜"><svg class="ic"><use href="#bi"/></svg></button>
  <button class="tb" aria-label="下划线"><svg class="ic"><text x="10" y="15" text-anchor="middle" font-family="Liberation Serif" font-weight="700" font-size="16" fill="#8c8c8c">U</text><path d="M4 18h12" stroke="#8c8c8c" stroke-width="1.500"/></svg></button>
  <div class="combo framed w-zoom me-1"><select aria-label="缩放"><option>100%</option></select></div>
 </div>
 <div class="strip more">
  <span class="grip"></span>
  <div class="combo open w-lang me-2"><select aria-label="语言"><option>中文简体</option></select></div>
 </div>
 <div class="strip more flex-grow-1">
  <span class="grip"></span>
  <button class="tb" aria-label="指示灯"><svg class="ic"><use href="#w1"/></svg></button>
  <button class="tb" aria-label="开关"><svg class="ic"><use href="#w2"/></svg></button>
  <button class="tb" aria-label="按钮"><svg class="ic"><use href="#w3"/></svg></button>
  <button class="tb" aria-label="面板"><svg class="ic"><use href="#w4"/></svg></button>
  <button class="tb" aria-label="数值"><svg class="ic"><use href="#w5"/></svg></button>
  <button class="tb" aria-label="管道"><svg class="ic"><use href="#w6"/></svg></button>
  <button class="tb" aria-label="表格"><svg class="ic"><use href="#w7"/></svg></button>
  <button class="tb" aria-label="趋势"><svg class="ic"><use href="#w7"/></svg></button>
  <button class="tb" aria-label="报警条"><svg class="ic"><use href="#w7"/></svg></button>
  <button class="tb" aria-label="图片"><svg class="ic"><use href="#w8"/></svg></button>
  <button class="tb" aria-label="动态文本"><svg class="ic"><text x="10" y="13" text-anchor="middle" font-family="Liberation Serif" font-weight="700" font-size="8" fill="#999">EXT</text></svg></button>
  <button class="tb" aria-label="更多图元"><svg class="ic"><use href="#w9"/></svg></button>
  <button class="ms-auto align-self-end" aria-label="更多"><svg width="14" height="30"><path d="M0 0h14v30H0z" fill="url(#gg)" opacity=".45"/><path d="M3 18h7M4 22h5l-2.500 3z" stroke="#000" stroke-width="1.200"/></svg></button>
 </div>
</div>
</div>

<div class="workspace d-flex">
<aside class="side d-flex flex-column">
 <div class="sidehead d-flex align-items-center"><span>工程浏览器</span><span class="dots"></span>
  <svg width="12" height="14" class="mx-1"><path d="M3 1h6v6h2M3 1v6H1h8M8 1v6M6 7v6" fill="none" stroke="#444" stroke-width="1.500"/></svg>
  <svg width="12" height="12"><path d="M1 1l10 10M11 1L1 11" stroke="#444" stroke-width="1.700"/></svg></div>
 <div class="pane flex-grow-1">
 <ul class="tree"><li>
  <div class="nrow"><span class="lead-in"><i class="ex"></i></span><span class="pic"><svg class="ic"><use href="#cubes"/></svg></span><span class="cap">新版本测试</span></div>
  <ul>
  <li><div class="nrow"><span class="lead-in"></span><span class="pic"><svg class="ic"><use href="#attr"/></svg></span><span class="cap">工程属性</span></div></li>
  <li><div class="nrow"><span class="lead-in"><i class="ex"></i></span><span class="pic"><svg class="ic"><use href="#dev"/></svg></span><span class="cap">设备</span></div>
   <ul>
   <li><div class="nrow"><span class="lead-in"></span><span class="pic"><svg class="ic"><use href="#com"/></svg></span><span class="cap on">串口</span></div></li>
   <li><div class="nrow"><span class="lead-in"></span><span class="pic"><svg class="ic"><use href="#net"/></svg></span><span class="cap">以太网</span></div></li>
   <li><div class="nrow"><span class="lead-in"></span><span class="pic"><svg class="ic"><use href="#net"/></svg></span><span class="cap">云数据中心</span></div></li>
   <li><div class="nrow"><span class="lead-in"></span><span class="pic"><svg class="ic"><use href="#net"/></svg></span><span class="cap">MQTT</span></div></li>
   <li><div class="nrow"><span class="lead-in"></span><span class="pic"><svg class="ic"><use href="#cls"/></svg></span><span class="cap">设备用户分类</span></div></li>
   </ul></li>
  <li><div class="nrow"><span class="lead-in"><i class="ex plus"></i></span><span class="pic"><svg class="ic"><use href="#tag"/></svg></span><span class="cap">变量</span></div></li>
  <li><div class="nrow"><span class="lead-in"><i class="ex plus"></i></span><span class="pic"><svg class="ic"><use href="#win"/></svg></span><span class="cap">画面</span></div></li>
  <li><div class="nrow"><span class="lead-in"><i class="ex plus"></i></span><span class="pic"><svg class="ic"><use href="#task"/></svg></span><span class="cap">任务</span></div></li>
  <li><div class="nrow"><span class="lead-in"><i class="ex plus"></i></span><span class="pic"><svg class="ic"><use href="#evt"/></svg></span><span class="cap">事件</span></div></li>
  <li><div class="nrow"><span class="lead-in"><i class="ex plus"></i></span><span class="pic"><svg class="ic"><use href="#usr"/></svg></span><span class="cap">用户安全</span></div></li>
  <li><div class="nrow"><span class="lead-in"></span><span class="pic"><svg class="ic"><use href="#flask"/></svg></span><span class="cap">配方</span></div></li>
  <li><div class="nrow"><span class="lead-in"></span><span class="pic"><svg class="ic"><use href="#bell"/></svg></span><span class="cap">报警</span></div></li>
  <li><div class="nrow"><span class="lead-in"></span><span class="pic"><svg class="ic"><use href="#clock"/></svg></span><span class="cap">历史记录</span></div></li>
  <li><div class="nrow"><span class="lead-in"></span><span class="pic"><svg class="ic"><use href="#clock"/></svg></span><span class="cap">数据组</span></div></li>
  <li><div class="nrow"><span class="lead-in"></span><span class="pic"><svg class="ic"><use href="#rep"/></svg></span><span class="cap">报表</span></div></li>
  <li><div class="nrow"><span class="lead-in"></span><span class="pic"><svg class="ic"><use href="#rec"/></svg></span><span class="cap">操作记录</span></div></li>
  <li><div class="nrow"><span class="lead-in"></span><span class="pic"><svg class="ic"><use href="#page"/><text x="9" y="12" text-anchor="middle" font-family="Liberation Serif" font-weight="700" font-size="13" fill="#333">Aa</text></svg></span><span class="cap">字体管理</span></div></li>
  <li><div class="nrow"><span class="lead-in"></span><span class="pic"><svg class="ic"><use href="#lang"/></svg></span><span class="cap">工程语言中心</span></div></li>
  <li><div class="nrow"><span class="lead-in"><i class="ex plus"></i></span><span class="pic"><svg class="ic"><use href="#tool"/></svg></span><span class="cap">外设</span></div></li>
  <li><div class="nrow"><span class="lead-in"></span><span class="pic"><svg class="ic"><use href="#srv"/></svg></span><span class="cap">数据上报服务器</span></div></li>
  </ul></li></ul>
 </div>
</aside>
<main class="content d-flex flex-column">
 <div class="tabs d-flex align-items-end">
  <a class="tabitem" href="#">工程概览</a><a class="tabitem cur" href="#">设备管理器 <svg width="12" height="12"><use href="#x"/></svg></a>
  <svg class="ms-auto me-2 mb-2" width="12" height="6"><path d="M0 0h12L6 6z"/></svg>
 </div>
 <div class="filter d-flex align-items-center"><label for="cat" class="cjk">分类:</label><div class="combo"><select id="cat"><option>串口</option></select></div></div>
 <div class="gridbox"><table><colgroup><col style="width:32px"><col style="width:97px"><col style="width:98px"><col></colgroup>
  <thead><tr><th></th><th>设备名称</th><th>设备类型</th><th>设备描述</th></tr></thead></table></div>
</main>
</div>
<footer class="statusbar d-flex"><span class="flex-grow-1">就绪</span><span class="me-3">运行平台:Haiwell HMI C7S</span><span class="me-4 pe-3">分辨率:800x480</span>
 <span class="ms-5 me-3">CAP</span><span class="me-2" style="color:#00f">NUM</span><span class="me-4">SCRL</span></footer>

<div class="veil d-flex justify-content-center align-items-start">
<section class="dlg" role="dialog" aria-label="添加设备">
 <div class="dlghead d-flex align-items-center"><span class="flex-grow-1">添加设备</span><button class="me-5" aria-label="帮助">?</button><button aria-label="关闭"><svg width="13" height="13"><use href="#x"/></svg></button></div>
 <div class="iface"><div>设备接口:</div>
  <div class="choices">
   <label><input type="radio" name="port" checked>串口(COM)</label>
   <label><input type="radio" name="port">以太网(TCP/IP)</label>
   <label><input type="radio" name="port">云数据中心</label>
   <label><input type="radio" name="port">MQTT</label>
  </div></div>
 <div class="dlgbody d-flex">
  <div class="devcol"><div class="hd">选择设备:</div>
   <div class="devbox"><div class="scroller">
    <ul class="tree"><li><div class="nrow"><span class="lead-in"><i class="ex"></i></span><span class="pic"><svg class="ic"><use href="#root"/></svg></span><span class="cap">设备</span></div>
    <ul>
    <li><div class="nrow"><span class="lead-in"><i class="ex"></i></span><span class="pic"><svg class="ic"><use href="#mod"/></svg></span><span class="cap">海为</span></div>
     <ul>
      <li><div class="nrow"><span class="lead-in"></span><span class="pic"><svg class="ic"><use href="#db"/></svg></span><span class="cap on">海为PLC</span></div></li>
      <li><div class="nrow"><span class="lead-in"></span><span class="pic"><svg class="ic"><use href="#db"/></svg></span><span class="cap">海为远程模块</span></div></li>
      <li><div class="nrow"><span class="lead-in"></span><span class="pic"><svg class="ic"><use href="#db"/></svg></span><span class="cap">海为变频器</span></div></li>
     </ul></li>
    <li><div class="nrow"><span class="lead-in"><i class="ex plus"></i></span><span class="pic"><svg class="ic"><use href="#mod"/></svg></span><span class="cap">台达</span></div></li>
    <li><div class="nrow"><span class="lead-in"><i class="ex plus"></i></span><span class="pic"><svg class="ic"><use href="#mod"/></svg></span><span class="cap">永宏</span></div></li>
    <li><div class="nrow"><span class="lead-in"><i class="ex plus"></i></span><span class="pic"><svg class="ic"><use href="#mod"/></svg></span><span class="cap">丰炜</span></div></li>
    <li><div class="nrow"><span class="lead-in"><i class="ex plus"></i></span><span class="pic"><svg class="ic"><use href="#mod"/></svg></span><span class="cap">泛达仪控</span></div></li>
    <li><div class="nrow"><span class="lead-in"><i class="ex"></i></span><span class="pic"><svg class="ic"><use href="#mod"/></svg></span><span class="cap">松下</span></div>
     <ul>
      <li><div class="nrow"><span class="lead-in"></span><span class="pic"><svg class="ic"><use href="#db"/></svg></span><span class="cap">松下FP-XH</span></div></li>
      <li><div class="nrow"><span class="lead-in"></span><span class="pic"><svg class="ic"><use href="#db"/></svg></span><span class="cap">松下FP-XH(MewTocol)</span></div></li>
     </ul></li>
    <li><div class="nrow"><span class="lead-in"><i class="ex plus"></i></span><span class="pic"><svg class="ic"><use href="#mod"/></svg></span><span class="cap">信捷</span></div></li>
    <li><div class="nrow"><span class="lead-in"><i class="ex plus"></i></span><span class="pic"><svg class="ic"><use href="#mod"/></svg></span><span class="cap">西门子</span></div></li>
    <li><div class="nrow"><span class="lead-in"><i class="ex plus"></i></span><span class="pic"><svg class="ic"><use href="#mod"/></svg></span><span class="cap">三菱</span></div></li>
    <li><div class="nrow"><span class="lead-in"><i class="ex plus"></i></span><span class="pic"><svg class="ic"><use href="#mod"/></svg></span><span class="cap">维控</span></div></li>
    <li><div class="nrow"><span class="lead-in"><i class="ex plus"></i></span><span class="pic"><svg class="ic"><use href="#mod"/></svg></span><span class="cap">欧姆龙</span></div></li>
    <li><div class="nrow"><span class="lead-in"><i class="ex plus"></i></span><span class="pic"><svg class="ic"><use href="#mod"/></svg></span><span class="cap">和利时</span></div></li>
    <li><div class="nrow"><span class="lead-in"><i class="ex"></i></span><span class="pic"><svg class="ic"><use href="#mod"/></svg></span><span class="cap">和泉</span></div>
     <ul><li><div class="nrow"><span class="lead-in"></span><span class="pic"><svg class="ic"><use href="#db"/></svg></span><span class="cap">MicroSmart FC6A</span></div></li></ul></li>
    <li><div class="nrow"><span class="lead-in"><i class="ex plus"></i></span><span class="pic"><svg class="ic"><use href="#mod"/></svg></span><span class="cap">宇电</span></div></li>
    <li><div class="nrow"><span class="lead-in"><i class="ex plus"></i></span><span class="pic"><svg class="ic"><use href="#mod"/></svg></span><span class="cap">光洋</span></div></li>
    <li><div class="nrow"><span class="lead-in"><i class="ex plus"></i></span><span class="pic"><svg class="ic"><use href="#mod"/></svg></span><span class="cap">东元</span></div></li>
    <li><div class="nrow"><span class="lead-in"><i class="ex plus"></i></span><span class="pic"><svg class="ic"><use href="#mod"/></svg></span><span class="cap">天一</span></div></li>
    </ul></li></ul></div>
    <div class="sb"><span class="arr"><svg width="10" height="7"><use href="#up"/></svg></span><span class="thumb h-dev"></span><span class="arr mt-auto"><svg width="10" height="7"><use href="#dn"/></svg></span></div>
   </div></div>
  <div class="propcol"><div class="hd">设备属性:</div>
   <div class="ptools d-flex">
    <button class="on" aria-label="按分类"><svg class="ic"><rect x=".5" y=".5" width="8" height="8" rx="2" fill="#fff" stroke="#6a8cc0"/><rect x=".5" y="11.500" width="8" height="8" rx="2" fill="#fff" stroke="#6a8cc0"/><path d="M2.500 4.500h4M4.500 2.500v4M2.500 15.500h4M4.500 13.500v4" stroke="#000"/><path d="M11 2h4M11 5h4M11 8h4M11 13h4M11 16h4M11 19h4" stroke="#7a92b0"/><path d="M16 3h4M16 6h4M16 9h4M16 13h4M16 19h4" stroke="#8aa0c0"/></svg></button>
    <button aria-label="按字母"><svg class="ic overflow-visible"><text x="5" y="8" text-anchor="middle" font-family="Liberation Serif" font-weight="700" font-size="11" fill="#3c58b0">A</text><text x="5" y="18" text-anchor="middle" font-family="Liberation Serif" font-weight="700" font-size="12" fill="#a02830">Z</text><path d="M16 1v15M14 14l2 4 2-4z" stroke="#000" fill="#000" stroke-width="1.300"/></svg></button>
    <span class="bar"></span>
    <button aria-label="属性页"><svg class="ic"><path d="M1 1h18v18H1z" fill="#dcdcdc" stroke="#a8a8a8" stroke-width="2"/><path d="M2 4h16" stroke="#b4b4b4" stroke-width="2"/><path d="M4 8h5v2h7v6H4zM6 13h8" fill="#eee" stroke="#b0b0b0"/></svg></button>
   </div>
   <div class="propbox"><div class="view"><table><colgroup><col style="width:17px"><col style="width:203px"><col></colgroup>
    <tbody>
    <tr class="cat"><td class="gut"><i class="fold"></i></td><th colspan="2">COM参数</th></tr>
    <tr><td class="gut"></td><th>COM端口</th><td>COM1</td></tr>
    <tr><td class="gut"></td><th>设备站号</th><td>1</td></tr>
    <tr class="cur"><td class="gut"></td><th>通讯类型</th><td class="val"><div class="d-flex justify-content-between"><span>RS-485</span><button class="pick" aria-label="展开"><svg width="10" height="7"><path d="M1 1l4 4 4-4" fill="none" stroke="#444" stroke-width="1.200"/></svg></button></div></td></tr>
    <tr><td class="gut"></td><th>通讯协议</th><td>Modbus</td></tr>
    <tr><td class="gut"></td><th>波特率</th><td class="val">9600</td></tr>
    <tr><td class="gut"></td><th>数据位</th><td>8</td></tr>
    <tr><td class="gut"></td><th>奇偶校验</th><td class="val">Odd</td></tr>
    <tr><td class="gut"></td><th>停止位</th><td>2</td></tr>
    <tr><td class="gut"></td><th>流控制</th><td>None</td></tr>
    <tr class="cat"><td class="gut"><i class="fold"></i></td><th colspan="2">其他</th></tr>
    <tr><td class="gut"></td><th>广播</th><td>停用</td></tr>
    <tr class="off"><td class="gut"></td><th>广播站号</th><td>255</td></tr>
    <tr><td class="gut"></td><th>写入间隔(ms)</th><td>0</td></tr>
    <tr><td class="gut"></td><th>定时同步PLC时钟</th><td>否</td></tr>
    <tr><td class="gut"></td><th>时间间隔(m)</th><td>1</td></tr>
    <tr><td class="gut"></td><th>修改时间后立即同步PLC时钟</th><td>否</td></tr>
    <tr><td class="gut"></td><th>S系列PLC</th><td>否</td></tr>
    <tr class="cat"><td class="gut"><i class="fold"></i></td><th colspan="2">设备信息</th></tr>
    <tr><td class="gut"></td><th>设备名称</th><td class="val">海为PLC_1</td></tr>
    <tr><td class="gut"></td><th>设备描述</th><td></td></tr>
    <tr class="cat"><td class="gut"><i class="fold"></i></td><th colspan="2">采集通信</th></tr>
    <tr><td class="gut"></td><th>优先级</th><td>0</td></tr>
    </tbody></table></div>
    <div class="sb"><span class="arr"><svg width="10" height="7"><use href="#up"/></svg></span><span class="thumb h-prop"></span><span class="arr mt-auto"><svg width="10" height="7"><use href="#dn"/></svg></span></div>
   </div>
   <div class="help">通讯类型</div>
  </div>
 </div>
 <div class="dlgfoot d-flex justify-content-end"><button>确定</button><button>取消</button></div>
</section>
</div>

<div class="meter"></div>
<div class="ime">
 <svg class="logo" width="38" height="36" viewBox="0 0 38 36"><path d="M2 6Q1 3 4 3L28 0q3 0 4 3l5 24q0 3-3 4L11 36q-3 0-4-3z" fill="#f4511e"/><path d="M29 8C20 5 9 8 10 13c1 5 19 2 19 8 0 5-10 7-18 4" fill="none" stroke="#fff" stroke-width="5" stroke-linecap="round"/></svg>
 <svg class="ic ms-1" fill="none" stroke="#1b73c8" stroke-width="2.500"><path d="M2 6h16v8H2zM10 1v18"/></svg>
 <svg class="ic"><circle cx="5" cy="6" r="2.500" fill="none" stroke="#1b73c8" stroke-width="1.500"/><path d="M12 10h4v4l-3 4h-1l1-4h-1z" fill="#1b73c8"/></svg>
 <svg class="ic"><circle cx="10" cy="10" r="8.500" fill="none" stroke="#1b73c8" stroke-width="2"/><path d="M7 6v3M13 6v3M5 11c1 6 9 6 10 0" fill="none" stroke="#1b73c8" stroke-width="1.800"/></svg>
 <svg class="ic"><rect x="6" y="0" width="8" height="13" rx="4" fill="#1b73c8"/><path d="M3 8c0 9 14 9 14 0M10 15v4M6 19h8" fill="none" stroke="#1b73c8" stroke-width="1.800"/></svg>
 <svg class="ic"><rect x="0" y="3" width="20" height="15" rx="2" fill="#1b73c8"/><path d="M3 7h14M3 10h14M5 14h10" stroke="#fff" stroke-width="1.800" stroke-dasharray="2 1"/></svg>
 <svg class="ic"><circle cx="8" cy="5" r="4.500" fill="#b4bfd0"/><path d="M0 18c0-10 14-10 15 0z" fill="#b4bfd0"/><path d="M11 11h8v8h-8z" fill="#fff" stroke="#b4bfd0" stroke-width="1.500"/><path d="M15 13v4" stroke="#b4bfd0" stroke-width="1.500"/></svg>
 <svg class="ic"><path d="M6 1q4 3 8 0l5 3-2 5-2-1v11H5V8L3 9 1 4z" fill="#1b73c8"/></svg>
 <svg class="ic"><path d="M2 2h7v7H2zM2 11h7v8H2zM11 11h8v8h-8z" fill="#1b73c8"/><rect x="12" y="3" width="6" height="5" fill="none" stroke="#1b73c8" stroke-width="1.500"/></svg>
</div>
</div>
</body>
</html>
